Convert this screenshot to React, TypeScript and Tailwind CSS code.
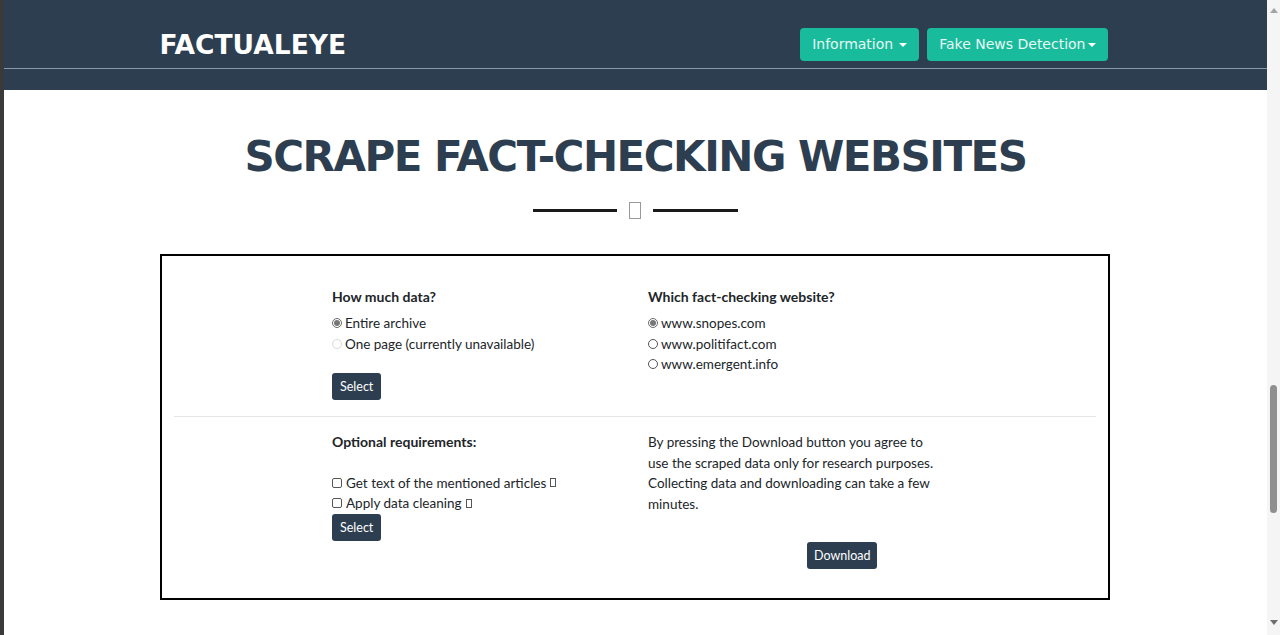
import React from "react";

const heading = { fontFamily: '"DejaVu Sans", "Open Sans", sans-serif' };
const body = { fontFamily: 'Lato, "Open Sans", sans-serif' };

function Radio({ checked, disabled, label }: { checked?: boolean; disabled?: boolean; label: string }) {
  return (
    <label className="flex items-center h-[20.5px] text-[13.5px] text-[#212529]">
      <span
        className={`mr-[3px] w-[10px] h-[10px] rounded-full border flex items-center justify-center ${
          disabled ? "border-[#d8d8d8]" : checked ? "border-[#6b6b6b]" : "border-[#555]"
        }`}
      >
        {checked && <span className="w-[6px] h-[6px] rounded-full bg-[#777]" />}
      </span>
      {label}
    </label>
  );
}

function Check({ label }: { label: string }) {
  return (
    <label className="flex items-center h-[20.5px] text-[13.5px] text-[#212529]">
      <span className="mr-[4px] w-[10px] h-[10px] rounded-[2px] border border-[#555] bg-white" />
      {label}
      <span className="ml-[4px] inline-block w-[6px] h-[9px] border border-[#555]" />
    </label>
  );
}

function DarkButton({ children, wide }: { children: React.ReactNode; wide?: boolean }) {
  return (
    <button
      className={`bg-[#2c3e50] text-white text-[12.5px] rounded-[3px] h-[27px] leading-[27px] ${
        wide ? "px-[8px]" : "px-[7px]"
      }`}
    >
      {children}
    </button>
  );
}

function Caret() {
  return <span className="inline-block ml-[6px] w-0 h-0 border-l-[4px] border-r-[4px] border-t-[4.5px] border-l-transparent border-r-transparent border-t-white align-middle" />;
}

export default function App() {
  return (
    <div className="flex w-[1280px] h-[635px] overflow-hidden bg-white" style={body}>
      <div className="w-[4px] bg-[#3a3a3a] shrink-0" />
      <div className="flex-1 flex flex-col">
        <nav className="bg-[#2c3e50] h-[90px]">
          <div className="w-[952px] mx-auto pt-[28px] flex justify-between h-[68px] items-start">
            <div className="text-white text-[26.5px] font-bold leading-[33px]" style={heading}>
              FACTUALEYE
            </div>
            <div className="flex gap-[8px] mr-[4px]" style={heading}>
              <button className="bg-[#18bc9c] text-[#e8f7f3] text-[14px] rounded-[4px] h-[33px] px-[12px] flex items-center">
                Information
                <Caret />
              </button>
              <button className="bg-[#18bc9c] text-[#e8f7f3] text-[14px] rounded-[4px] h-[33px] px-[12px] flex items-center">
                Fake News Detection
                <span className="inline-block ml-[2px] w-0 h-0 border-l-[4px] border-r-[4px] border-t-[4.5px] border-l-transparent border-r-transparent border-t-white" />
              </button>
            </div>
          </div>
          <div className="h-[1px] bg-[#8a99a6]" />
        </nav>

        <div className="pt-[38px]">
          <h1
            className="text-center text-[#2c3e50] text-[42px] font-bold leading-[58px] tracking-[-1.5px]"
            style={heading}
          >
            SCRAPE FACT-CHECKING WEBSITES
          </h1>
          <div className="flex items-center justify-center gap-[12px] mt-[16px] ml-[-1px]">
            <div className="w-[84px] h-[3px] bg-[#1a1a1a]" />
            <div className="w-[12px] h-[17px] border border-[#999] bg-white" />
            <div className="w-[85px] h-[3px] bg-[#1a1a1a]" />
          </div>

          <div className="w-[950px] ml-[156px] mt-[35px] border-2 border-black h-[346px] px-[12px]">
            <div className="flex pt-[30px] h-[160px]">
              <div className="w-[158px]" />
              <div className="w-[316px]">
                <div className="font-bold text-[14px] text-[#212529] mb-[6px]">How much data?</div>
                <Radio checked label="Entire archive" />
                <Radio disabled label="One page (currently unavailable)" />
                <div className="mt-[19px]">
                  <DarkButton wide>Select</DarkButton>
                </div>
              </div>
              <div className="w-[316px]">
                <div className="font-bold text-[14px] text-[#212529] mb-[6px]">Which fact-checking website?</div>
                <Radio checked label="www.snopes.com" />
                <Radio label="www.politifact.com" />
                <Radio label="www.emergent.info" />
              </div>
            </div>
            <div className="h-[1px] bg-[#e6e6e6]" />
            <div className="flex pt-[15px]">
              <div className="w-[158px]" />
              <div className="w-[316px]">
                <div className="font-bold text-[14px] text-[#212529] leading-[20px] mb-[20.5px]">Optional requirements:</div>
                <Check label="Get text of the mentioned articles" />
                <Check label="Apply data cleaning" />
                <DarkButton wide>Select</DarkButton>
              </div>
              <div className="w-[300px]">
                <p className="text-[13.5px] text-[#212529] leading-[20.5px] w-[292px]">
                  By pressing the Download button you agree to use the scraped data only for research purposes. Collecting data and downloading can take a few minutes.
                </p>
                <div className="mt-[28px] pl-[159px]">
                  <DarkButton>Download</DarkButton>
                </div>
              </div>
            </div>
          </div>
        </div>
      </div>
      <div className="w-[13px] shrink-0 bg-[#f5f5f5] flex flex-col items-center">
        <div className="mt-[8px] w-0 h-0 border-l-[4px] border-r-[4px] border-b-[5px] border-l-transparent border-r-transparent border-b-[#a3a3a3]" />
        <div className="mt-[372px] w-[7px] h-[128px] rounded-full bg-[#8f8f8f]" />
        <div className="mt-[107px] w-0 h-0 border-l-[4px] border-r-[4px] border-t-[5px] border-l-transparent border-r-transparent border-t-[#6e6e6e]" />
      </div>
    </div>
  );
}
